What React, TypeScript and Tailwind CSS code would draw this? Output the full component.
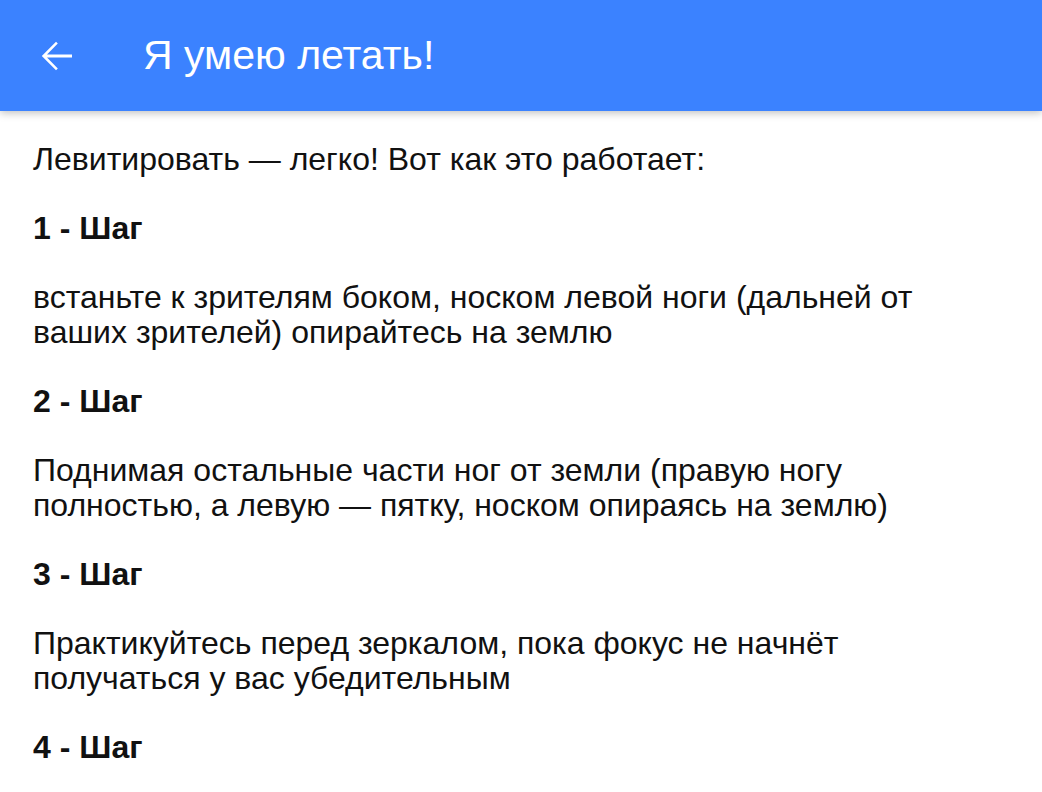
const steps = [
  {
    title: "1 - Шаг",
    text: "встаньте к зрителям боком, носком левой ноги (дальней от ваших зрителей) опирайтесь на землю",
  },
  {
    title: "2 - Шаг",
    text: "Поднимая остальные части ног от земли (правую ногу полностью, а левую — пятку, носком опираясь на землю)",
  },
  {
    title: "3 - Шаг",
    text: "Практикуйтесь перед зеркалом, пока фокус не начнёт получаться у вас убедительным",
  },
  { title: "4 - Шаг", text: "" },
];

function BackIcon() {
  return (
    <svg width="48" height="48" viewBox="0 0 24 24" fill="white">
      <path d="M20 11.2H7.5l5.4-5.4L12 4.9 4.9 12l7.1 7.1.9-.9-5.4-5.4H20z" />
    </svg>
  );
}

export default function App() {
  return (
    <div className="min-h-screen bg-white font-[family-name:Liberation_Sans,Arial,sans-serif] text-[#111]">
      <header className="relative z-10 flex h-[111px] items-center bg-[#3b82ff] px-8 shadow-[0_2px_8px_rgba(0,0,0,0.25)]">
        <button type="button" className="flex h-12 w-12 items-center justify-center">
          <BackIcon />
        </button>
        <h1 className="ml-[63px] text-[41px] leading-none text-white">
          Я умею летать!
        </h1>
      </header>

      <main className="flex flex-col gap-[34px] px-[33px] pt-[31px] pb-10 text-[32px] leading-[35px]">
        <p>Левитировать — легко! Вот как это работает:</p>
        {steps.map((step) => (
          <div key={step.title} className="contents">
            <h2 className="font-bold">{step.title}</h2>
            {step.text && <p>{step.text}</p>}
          </div>
        ))}
      </main>
    </div>
  );
}
